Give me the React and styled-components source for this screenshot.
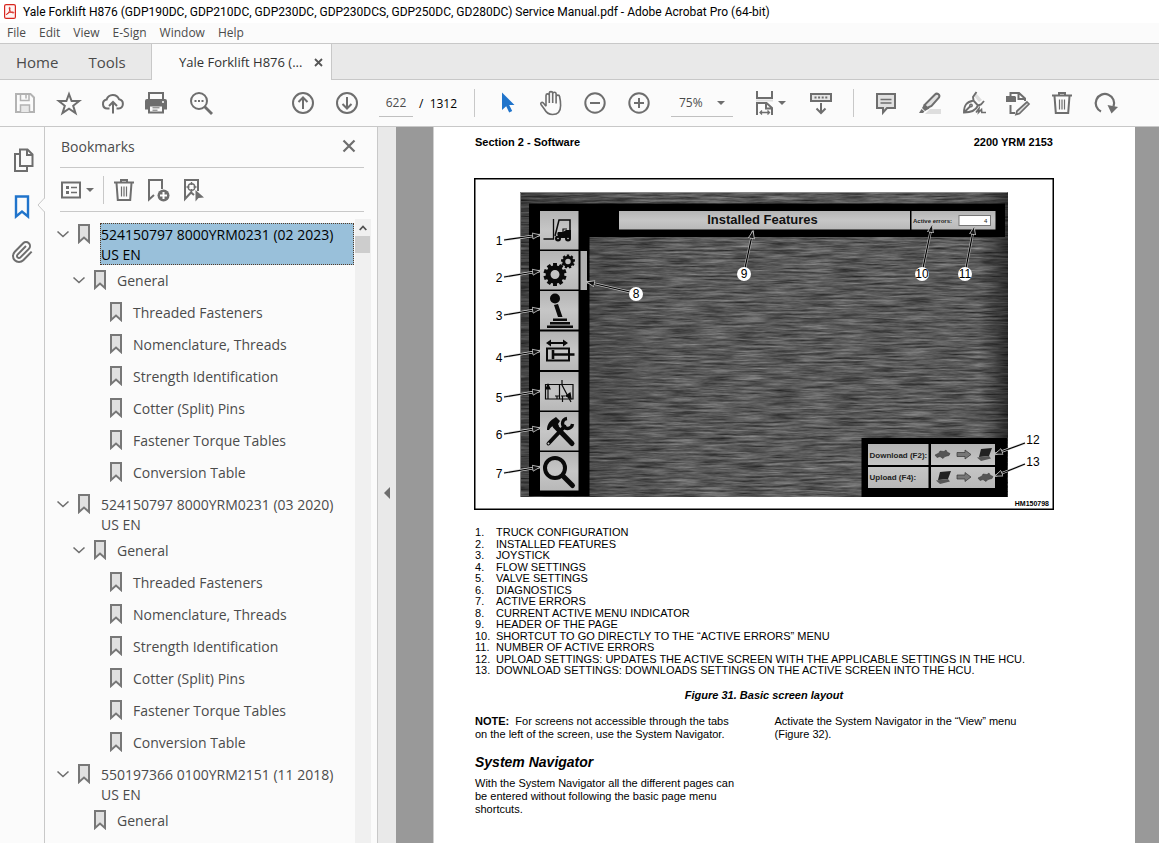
import React from "react";
import styled, { createGlobalStyle } from "styled-components";

const GlobalStyle = createGlobalStyle`
  * {
    box-sizing: border-box;
  }
  body {
    margin: 0;
    font-family: "Open Sans", "Noto Sans", sans-serif;
    color: #4b4b4b;
    background: #fbfbfb;
  }
  button, input, select {
    margin: 0;
    padding: 0;
    border: none;
    background: none;
    font: inherit;
    color: inherit;
  }
`;

const Window = styled.div`
  display: flex;
  flex-direction: column;
  height: 100vh;
  overflow: hidden;
`;

const TitleBar = styled.header`
  display: flex;
  align-items: center;
  gap: 7px;
  height: 23px;
  padding-left: 4px;
  flex-shrink: 0;
  background: #fff;
`;

const WindowTitle = styled.h1`
  margin: 0;
  font-family: Roboto, "Open Sans", sans-serif;
  font-size: 12px;
  line-height: 20px;
  font-weight: 400;
  color: #000;
  white-space: nowrap;
`;

const MenuBar = styled.nav`
  display: flex;
  gap: 13px;
  height: 20px;
  padding-left: 7px;
  flex-shrink: 0;
  font-size: 12px;
  line-height: 20px;
`;

const TabBar = styled.div`
  display: flex;
  height: 37px;
  flex-shrink: 0;
  background: #e9e9e9;
  border-top: 1px solid #c8c8c8;
  border-bottom: 1px solid #c8c8c8;
`;

const HomeTabs = styled.div`
  display: flex;
  gap: 30px;
  width: 151px;
  padding-left: 16px;
  font-size: 15px;
`;

const DocTab = styled.div`
  display: flex;
  align-items: center;
  justify-content: space-between;
  width: 181px;
  height: 36px;
  padding: 0 8px 0 27px;
  border: 1px solid #c8c8c8;
  border-width: 0 1px;
  background: #fbfbfb;
  font-size: 13px;
  color: #323232;
  svg {
    display: block;
  }
`;

const IconButton = styled.button`
  display: flex;
  align-items: center;
  justify-content: center;
  width: ${(p) => p.$width || 44}px;
  height: 100%;
  flex-shrink: 0;
  svg {
    flex-shrink: 0;
  }
`;

const Toolbar = styled.div`
  display: flex;
  align-items: center;
  height: 47px;
  flex-shrink: 0;
  padding-left: 3px;
  border-bottom: 1px solid #c8c8c8;
  font-size: 12px;
`;

const ToolGroup = styled.div`
  display: flex;
  align-items: center;
  height: 100%;
  margin-left: ${(p) => p.$before || 0}px;
`;

const Divider = styled.span`
  width: 1px;
  height: 28px;
  background: #c8c8c8;
  margin: 0 10px;
`;

const PageInput = styled.input`
  width: 34px;
  height: 28px;
  text-align: center;
  border-bottom: 1px solid #c0c0c0;
`;

const PageCount = styled.span`
  width: 45px;
  padding-left: 6px;
  color: #000;
  white-space: pre;
`;

const ZoomBox = styled.div`
  display: grid;
  align-items: center;
  width: 62px;
  height: 28px;
  margin: 0 19px 0 10px;
  border-bottom: 1px solid #c0c0c0;
  > * {
    grid-area: 1 / 1;
  }
`;

const ZoomSelect = styled.select`
  appearance: none;
  width: 100%;
  padding-left: 8px;
`;

const Caret = styled.span`
  width: 0;
  border: 4px solid transparent;
  border-top-color: #6e6e6e;
  border-bottom: none;
  justify-self: end;
  margin: 0 ${(p) => p.$right || 0}px 0 0;
  pointer-events: none;
`;

const Body = styled.div`
  display: flex;
  flex: 1;
  min-height: 0;
`;

const Rail = styled.nav`
  position: relative;
  display: flex;
  flex-direction: column;
  width: 45px;
  padding-top: 10px;
  flex-shrink: 0;
  border-right: 1px solid #c8c8c8;
`;

const RailButton = styled.button`
  display: flex;
  align-items: center;
  height: 46px;
  padding-left: 10px;
`;

const Notch = styled.svg`
  position: absolute;
  right: -1px;
  top: 71px;
`;

const Panel = styled.aside`
  display: flex;
  flex-direction: column;
  width: 333px;
  flex-shrink: 0;
  padding: 0 6px 0 15px;
  border-right: 1px solid #c8c8c8;
`;

const PanelHeader = styled.div`
  display: flex;
  align-items: center;
  justify-content: space-between;
  height: 41px;
  flex-shrink: 0;
  margin-right: 7px;
  padding: 0 8px 2px 1px;
  border-bottom: 1px solid #c8c8c8;
  svg {
    display: block;
  }
`;

const PanelTitle = styled.h2`
  margin: 0;
  font-size: 14px;
  font-weight: 400;
`;

const PanelTools = styled.div`
  display: flex;
  align-items: center;
  height: 44px;
  flex-shrink: 0;
  margin-right: 7px;
  border-bottom: 1px solid #c8c8c8;
`;

const PanelDivider = styled.span`
  width: 1px;
  height: 28px;
  margin: 0 2px 0 9px;
  background: #c8c8c8;
`;

const TreeArea = styled.div`
  display: flex;
  flex: 1;
  min-height: 0;
  margin: 7px 0 0 -4px;
`;

const Tree = styled.ul`
  flex: 1;
  margin: 0;
  padding: 0;
  list-style: none;
  overflow: hidden;
  font-size: 14px;
  line-height: 20px;
`;

const TreeRow = styled.li`
  display: flex;
  align-items: flex-start;
  padding: 4px 1px ${(p) => (p.$tall ? 0 : 6)}px ${(p) => p.$indent}px;
`;

const Twisty = styled.button`
  display: flex;
  width: 21px;
  height: 22px;
  align-items: center;
`;

const TreeIcon = styled.svg`
  width: 14px;
  height: 20px;
  margin: 1px 9px 0 0;
  flex-shrink: 0;
`;

const TreeLink = styled.a`
  flex: 1;
  padding: 2px 0 0 1px;
  color: ${(p) => (p.$selected ? "#000" : "#4b4b4b")};
  background: ${(p) => (p.$selected ? "#99c0da" : "none")};
  outline: ${(p) => (p.$selected ? "1px dotted #553c28" : "none")};
  outline-offset: -1px;
  text-decoration: none;
`;

const ScrollTrack = styled.div`
  width: 16px;
  background: #f0f0f0;
`;

const ScrollButton = styled.button`
  display: grid;
  place-items: center;
  width: 16px;
  height: 17px;
`;

const ScrollThumb = styled.div`
  width: 15px;
  height: 17px;
  background: #cdcdcd;
`;

const Splitter = styled.button`
  width: 18px;
  padding-top: 16px;
  flex-shrink: 0;
  background: #e9e9e9;
`;

const Viewer = styled.main`
  flex: 1;
  min-width: 0;
  padding: 0 24px 0 37px;
  background: #999;
  overflow: hidden;
`;

const Page = styled.article`
  min-height: 100%;
  padding: 8px 81px 0 40px;
  border-left: 1px solid #d0d0d0;
  background: #fff;
  color: #000;
  font-family: "Liberation Sans", Arial, sans-serif;
  font-size: 11px;
  line-height: 13px;
`;

const RunningHead = styled.div`
  display: flex;
  justify-content: space-between;
  padding: 1px 1px 0;
  font-weight: 700;
`;

const Figure = styled.figure`
  margin: 29px 0 0;
  svg {
    display: block;
    width: 100%;
  }
`;

const Legend = styled.ol`
  display: flex;
  flex-direction: column;
  justify-content: space-between;
  height: 149px;
  margin: 17px 0 0;
  padding: 0 0 0 1px;
  list-style: none;
  line-height: 11px;
`;

const LegendItem = styled.li`
  display: flex;
  white-space: nowrap;
`;

const LegendNumber = styled.span`
  width: 21px;
`;

const Caption = styled.figcaption`
  margin-top: 13px;
  text-align: center;
  font-weight: 700;
  font-style: italic;
`;

const Columns = styled.div`
  display: grid;
  grid-template-columns: 1fr 1fr;
  gap: 20px;
  margin-top: 13px;
  padding-left: 1px;
`;

const Paragraph = styled.p`
  margin: 0;
`;

const SectionTitle = styled.h3`
  margin: 13px 0 7px;
  font-size: 14px;
  line-height: 16px;
  font-style: italic;
`;

function Icon({ children, size = 26, color = "#6e6e6e" }) {
  return (
    <svg width={size} height={size} viewBox={`0 0 ${size} ${size}`} fill="none" stroke={color} strokeWidth="2" aria-hidden="true">
      {children}
    </svg>
  );
}

const icons = {
  save: (
    <Icon color="#b3b3b3">
      <path d="M4 4h14.500L22 7.500V22H4z" />
      <path d="M8.500 4v6.500h8.500V4M14 5v3.500" strokeWidth="1.500" />
      <path d="M8.500 22v-7h9v7" fill="#e8e8e8" strokeWidth="1.500" />
    </Icon>
  ),
  star: (
    <Icon>
      <path d="M13 4l2.600 7h7.600l-6 4.800 2.300 7.300L13 18.700l-6.500 4.400 2.300-7.300-6-4.800h7.600z" />
    </Icon>
  ),
  cloud: (
    <Icon>
      <path d="M9.500 18.500H7.200a4.500 4.500 0 0 1-.6-8.900A6.600 6.600 0 0 1 19 9.200a4.700 4.700 0 0 1-.3 9.300h-2.200M13 23.500v-11M9 16l4-4 4 4" />
    </Icon>
  ),
  print: (
    <Icon>
      <path d="M5 10V3h14v7" />
      <path d="M3 9h18a2 2 0 0 1 2 2v8.500h-4V16H5v3.500H1V11a2 2 0 0 1 2-2z" fill="#6e6e6e" stroke="none" />
      <path d="M5 15.500h14v7H5z" fill="#fbfbfb" />
      <path d="M8.500 17.800h7M8.500 20.200h5" strokeWidth="1" />
      <path d="M18 12h2" stroke="#fff" strokeWidth="1.500" />
    </Icon>
  ),
  search: (
    <Icon>
      <circle cx="11" cy="11" r="8" />
      <path d="M16.500 16.500l7.500 7.500" strokeWidth="2.800" />
      <path d="M6.500 11h2M10 11h2M13.500 11h2" />
    </Icon>
  ),
  up: (
    <Icon>
      <circle cx="13" cy="13" r="10" />
      <path d="M13 19V8M8.500 12L13 7.500l4.500 4.500" />
    </Icon>
  ),
  down: (
    <Icon>
      <circle cx="13" cy="13" r="10" />
      <path d="M13 7v11M8.500 14l4.500 4.500 4.500-4.500" />
    </Icon>
  ),
  pointer: (
    <Icon>
      <path d="M8 2.500v17.500l4.200-3.800 3 6.300 3-1.400-3-6.100H20.500z" fill="#2074cb" stroke="none" />
    </Icon>
  ),
  hand: (
    <Icon>
      <path
        d="M8 16.200V5.500a1.600 1.600 0 0 1 3.300 0V13M11.300 6V3.300a1.700 1.700 0 0 1 3.400 0V13M14.700 4a1.700 1.700 0 0 1 3.400 0v9.500M18.100 7a1.700 1.700 0 0 1 3.500-.2c.5 2 1 5 1 8.700 0 6-3.400 9-8.100 9-4.500 0-6.600-2.500-8.200-5.500L3 14.500c-.8-1.500.8-2.800 2.200-1.700L8 16.200"
        strokeWidth="1.600"
      />
    </Icon>
  ),
  minus: (
    <Icon>
      <circle cx="13" cy="13" r="9.700" />
      <path d="M8 13h10" />
    </Icon>
  ),
  plus: (
    <Icon>
      <circle cx="13" cy="13" r="9.700" />
      <path d="M8 13h10M13 8v10" />
    </Icon>
  ),
  fit: (
    <Icon>
      <path d="M5 1v7h15V1M5 25V13h9.500l5.500 5v7M14 13v5.500h6" />
      <path d="M4 10.500h17" stroke="#dedede" />
      <path d="M8 22.500h9.500M10 20.500l-2 2 2 2M15.500 20.500l2 2-2 2" strokeWidth="1.300" />
    </Icon>
  ),
  keyboard: (
    <Icon>
      <path d="M3 4h20v7H3z" fill="#e6e6e6" />
      <path d="M6.500 7.500h13" strokeDasharray="2 1.600" />
      <path d="M13 13v10M8.500 18.500L13 23l4.500-4.500" />
    </Icon>
  ),
  comment: (
    <Icon>
      <path d="M4 4h18v14h-8l-4 4.500V18H4z" fill="#e0e0e0" />
      <path d="M7.500 9.500h11M7.500 13h11" strokeWidth="1.400" />
    </Icon>
  ),
  highlight: (
    <Icon>
      <path d="M13 19h11v5H8z" fill="#dedede" stroke="none" />
      <path d="M18 4.500c2-2 5.500 0 4 3L14.500 16l-4.500 2-2.500-3z" fill="#e0e0e0" />
      <path d="M7 14.500l-2 3.500 3 3 4.500-2.500zM4.500 19L2 23h4l1.500-1.500z" fill="#6e6e6e" stroke="none" />
    </Icon>
  ),
  sign: (
    <Icon>
      <path d="M15 3l6 7-3 2-5-6z" fill="#dedede" stroke="none" />
      <path d="M3 22.500c0-7.500 2.500-10.500 9.500-12l4.500 5c-2 4.500-6.500 7-14 7zM12.500 10.500l-.5-3.500 3.500-5M17 15.500l3-1 3-3.500M3.500 22l6-6" strokeWidth="1.900" />
      <circle cx="10" cy="15.500" r="1.200" strokeWidth="1.500" />
      <path d="M15 22.500l3-4-.5 4 3-3 .3 3H25" strokeWidth="1.600" />
    </Icon>
  ),
  edit: (
    <Icon>
      <path d="M5.500 6V3H14l6 5.500V11M13.500 3v6H20M5.500 15v8H10" />
      <path d="M1 6h9l1 1v5H1z" fill="#6e6e6e" stroke="none" />
      <path d="M22 12l2 2-9.500 9.500-3.500 1 1-3.500z" fill="#e0e0e0" strokeWidth="1.700" />
    </Icon>
  ),
  trash: (
    <Icon>
      <path d="M3 5.500h20M10 5V3h6v2M5.500 6l1.300 17h12.400l1.300-17" />
      <path d="M10.500 9.500v10M13 9.500v10M15.500 9.500v10" strokeWidth="1.200" />
    </Icon>
  ),
  redo: (
    <Icon>
      <path d="M8 21.500a9.200 9.200 0 1 1 12.500-5" strokeWidth="2.200" />
      <path d="M14.500 15l10.500 2-6.500 6.500z" fill="#6e6e6e" stroke="none" />
    </Icon>
  ),
  pages: (
    <Icon>
      <path d="M10 2.500h7.500l5 5V19H10zM17 3v5h5M9 7H5v17h12v-4" />
    </Icon>
  ),
  bookmark: (
    <Icon color="#2074cb">
      <path d="M6 3.500h12v20l-6-5-6 5z" strokeWidth="2.400" />
    </Icon>
  ),
  clip: (
    <Icon size={24}>
      <path d="m16 6-8.414 8.586a2 2 0 0 0 2.829 2.829l8.414-8.586a4 4 0 1 0-5.657-5.657l-8.379 8.551a6 6 0 1 0 8.485 8.485l8.379-8.551" />
    </Icon>
  ),
  options: (
    <Icon>
      <path d="M2 5.500h18v15H2z" />
      <path d="M6 10.500h3M6 15.500h3" strokeWidth="3" />
      <path d="M11 10.500h6M11 15.500h6" strokeWidth="1.600" />
    </Icon>
  ),
  addMark: (
    <Icon>
      <path d="M9 18l-5 4.500V3h13v9" />
      <circle cx="18.500" cy="18.500" r="6" fill="#6e6e6e" stroke="none" />
      <path d="M15 18.500h7M18.500 15v7" stroke="#fff" />
    </Icon>
  ),
  findMark: (
    <Icon>
      <path d="M15 18l-3-2.500-6 6.500V3h13v11" />
      <circle cx="12.500" cy="10" r="3.300" strokeWidth="1.400" />
      <path d="M12.500 5v3M12.500 12v3M7.500 10h3M14.500 10h3" strokeWidth="1.400" />
      <path d="M16.500 13v11.500l3-3.500 5.500-.5z" fill="#6e6e6e" stroke="none" />
    </Icon>
  ),
};

const Tool = ({ name, label, width }) => (
  <IconButton type="button" aria-label={label} $width={width}>
    {icons[name]}
  </IconButton>
);

const sections = [
  "Threaded Fasteners",
  "Nomenclature, Threads",
  "Strength Identification",
  "Cotter (Split) Pins",
  "Fastener Torque Tables",
  "Conversion Table",
];

const bookmarks = [
  { level: 0, text: ["524150797 8000YRM0231 (02 2023)", "US EN"], open: true, selected: true },
  { level: 1, text: ["General"], open: true },
  ...sections.map((s) => ({ level: 2, text: [s] })),
  { level: 0, text: ["524150797 8000YRM0231 (03 2020)", "US EN"], open: true },
  { level: 1, text: ["General"], open: true },
  ...sections.map((s) => ({ level: 2, text: [s] })),
  { level: 0, text: ["550197366 0100YRM2151 (11 2018)", "US EN"], open: true },
  { level: 1, text: ["General"] },
];

const legend = [
  "TRUCK CONFIGURATION",
  "INSTALLED FEATURES",
  "JOYSTICK",
  "FLOW SETTINGS",
  "VALVE SETTINGS",
  "DIAGNOSTICS",
  "ACTIVE ERRORS",
  "CURRENT ACTIVE MENU INDICATOR",
  "HEADER OF THE PAGE",
  "SHORTCUT TO GO DIRECTLY TO THE “ACTIVE ERRORS” MENU",
  "NUMBER OF ACTIVE ERRORS",
  "UPLOAD SETTINGS: UPDATES THE ACTIVE SCREEN WITH THE APPLICABLE SETTINGS IN THE HCU.",
  "DOWNLOAD SETTINGS: DOWNLOADS SETTINGS ON THE ACTIVE SCREEN INTO THE HCU.",
];

// number, label position, arrow start, arrow tip, circled
const callouts = [
  [1, 499, 241, 504, 240, 540, 235],
  [2, 499, 278, 504, 277, 540, 271],
  [3, 499, 316, 504, 315, 540, 309],
  [4, 499, 358, 504, 357, 540, 351],
  [5, 499, 398, 504, 397, 540, 391],
  [6, 499, 435, 504, 434, 540, 428],
  [7, 499, 474, 504, 473, 540, 467],
  [8, 636, 294, 630, 292, 587, 282, true],
  [9, 744, 274, 745, 268, 753, 231, true],
  [10, 922, 274, 923, 268, 932, 225, true],
  [11, 965, 274, 966, 268, 974, 227, true],
  [12, 1033, 440, 1025, 443, 995, 454],
  [13, 1033, 462, 1025, 464, 995, 476],
];

const Gear = ({ cx, cy, r, teeth }) => (
  <g transform={`translate(${cx} ${cy})`}>
    <circle r={r * 0.6} fill="none" stroke="#0a0a0a" strokeWidth={r * 0.42} />
    {Array.from({ length: teeth }, (_, i) => (
      <rect key={i} x={-r * 0.17} y={-r} width={r * 0.34} height={r * 0.35} fill="#0a0a0a" transform={`rotate(${(i * 360) / teeth})`} />
    ))}
  </g>
);

const Laptop = ({ x, y }) => (
  <g transform={`translate(${x} ${y})`}>
    <path d="M5 0l11-1-3 8-10 1z" fill="#222" />
    <path d="M1 8.500l12-1.500 2 2.500-10 2.500z" fill="#555" />
  </g>
);

const Truck = ({ x, y }) => (
  <path transform={`translate(${x} ${y})`} d="M0 4.500l4-2 1-2 4 .5 2-1.500 1 2 3 1.500-1 2-4 1-2 2-3-2-3 1z" fill="#555" stroke="#333" strokeWidth=".5" />
);

const ArrowRight = ({ x, y }) => (
  <path transform={`translate(${x} ${y})`} d="M0 2h8V-.5L14 4l-6 4.500V6H0z" fill="#777" stroke="#333" strokeWidth=".7" />
);

function ScreenDrawing() {
  return (
    <svg viewBox="474 178 580 332" role="img" aria-label="Basic screen layout" fontFamily="Liberation Sans, Arial, sans-serif">
      <defs>
        <filter id="brushed" x="0" y="0" width="100%" height="100%" colorInterpolationFilters="sRGB">
          <feTurbulence type="fractalNoise" baseFrequency="0.03 0.5" numOctaves="4" seed="4" />
          <feColorMatrix values=".5 0 0 0 .1  .5 0 0 0 .1  .5 0 0 0 .1  0 0 0 0 1" />
        </filter>
        <linearGradient id="shade">
          <stop offset="0" stopColor="#000" stopOpacity=".3" />
          <stop offset=".3" stopColor="#000" stopOpacity="0" />
          <stop offset=".94" stopColor="#000" stopOpacity="0" />
          <stop offset="1" stopColor="#000" stopOpacity=".5" />
        </linearGradient>
        <linearGradient id="key" x2="0" y2="1">
          <stop offset="0" stopColor="#b4b4b4" />
          <stop offset=".5" stopColor="#c6c6c6" />
          <stop offset="1" stopColor="#b8b8b8" />
        </linearGradient>
        <marker id="tip" markerWidth="10" markerHeight="8" refX="8" refY="4" orient="auto" markerUnits="userSpaceOnUse">
          <path d="M.5 1l8 3-8 3z" fill="#111" stroke="#ddd" strokeWidth=".7" />
        </marker>
      </defs>
      <rect x="474.75" y="178.75" width="578.500" height="330.500" fill="#fff" stroke="#000" strokeWidth="1.500" />
      <rect x="520" y="192" width="488" height="305" filter="url(#brushed)" />
      <rect x="520" y="192" width="488" height="305" fill="url(#shade)" />
      <path d="M520.500 497V192.500H1007.500" fill="none" stroke="#888" />
      <path d="M529 203.500h476V237H589.500v259H529z" fill="#000" />
      <path d="M861.500 438H1007v59H861.500z" fill="#000" />

      {[211, 251, 291, 331.5, 372, 412, 452].map((y) => (
        <rect key={y} x="540" y={y} width="38.500" height="38.500" fill="url(#key)" />
      ))}
      <rect x="580.500" y="251" width="6.500" height="39" fill="#b0b0b0" />

      <g fill="none" stroke="#0a0a0a">
        <path d="M543.500 239h10V219" strokeWidth="1.300" />
        <path d="M555 236l4-16h11v17" strokeWidth="1.500" />
        <path d="M558 235v-2h5v-4h4" strokeWidth="1.200" />
        <path d="M558 232h5l3-2h5v8h-13z" fill="#0a0a0a" stroke="none" />
        <circle cx="558" cy="238.500" r="3" fill="#0a0a0a" stroke="none" />
        <circle cx="568" cy="238.500" r="3" fill="#0a0a0a" stroke="none" />
        <circle cx="558" cy="238.500" r=".8" fill="#ccc" stroke="none" />
        <circle cx="568" cy="238.500" r=".8" fill="#ccc" stroke="none" />
      </g>
      <Gear cx={555} cy={274.5} r={11.5} teeth={10} />
      <Gear cx={568} cy={261.5} r={7} teeth={9} />
      <g fill="#0a0a0a">
        <circle cx="555" cy="298.500" r="5" />
        <path d="M554 305l4-1 4.500 13h-4.500zM553 318.500h14v2.500h-14zM550 322h20v2.500h-20zM547 325.500h26v2.500h-26z" />
        <path d="M546 343l5-3.500v2.500h12v-2.500l5 3.500-5 3.500v-2.500h-12v2.500z" />
        <path d="M547 348.500h22v12h-22z" fill="none" stroke="#0a0a0a" strokeWidth="2" />
        <path d="M553 350v9M553 354.500h21.500" fill="none" stroke="#0a0a0a" strokeWidth="2.600" />
      </g>
      <g fill="none" stroke="#0a0a0a" strokeWidth="1.200">
        <path d="M545.500 384.500h27.500v14.500h-27.500zM559.500 384.500V399M548 399v-12M555 396h4M557 396v3M561 396h4M562.500 396v6M562 380v5l9 17" />
        <path d="M546 389l2-4.500 2 4.500zM571 398.500l-5-2.500 4-3z" fill="#0a0a0a" />
      </g>
      <g stroke="#0a0a0a" fill="none">
        <path d="M548.500 443.500l16-17" strokeWidth="4" strokeLinecap="round" />
        <path d="M555 426l17 17.500" strokeWidth="5" strokeLinecap="round" />
        <path d="M567 418.500a5 5 0 1 0 5.500 5.500" strokeWidth="3.400" />
        <path d="M547 430c0-6 3-9 6-11l3-2 4 4-2 3 1 2-3 3-3-3c-2 1-3 2-4 4z" fill="#0a0a0a" stroke="none" />
        <circle cx="548.500" cy="443.500" r="1" fill="#ccc" stroke="none" />
        <circle cx="555" cy="468" r="10" strokeWidth="4" />
        <path d="M563 476l9.500 9.500" strokeWidth="5" strokeLinecap="round" />
      </g>

      <path d="M619 211h291v18.500H619zM911.500 211h84v18.500h-84z" fill="url(#key)" />
      <text x="762.500" y="224" fontSize="13" fontWeight="700" textAnchor="middle" fill="#111">Installed Features</text>
      <text x="913" y="223" fontSize="6" fontWeight="700" fill="#222">Active errors:</text>
      <rect x="959" y="215.500" width="31.500" height="10" fill="#fff" stroke="#777" />
      <text x="984" y="223" fontSize="6" fill="#222">4</text>

      <path d="M868 444h60.500v21H868zM868 467h60.500v21H868zM931 444h64v21h-64zM931 467h64v21h-64z" fill="url(#key)" />
      <text x="869.500" y="457.500" fontSize="8" fontWeight="700" fill="#222">Download (F2):</text>
      <text x="869.500" y="480" fontSize="8" fontWeight="700" fill="#222">Upload (F4):</text>
      <Truck x={935} y={450.5} />
      <ArrowRight x={957} y={450.5} />
      <Laptop x={976} y={449} />
      <Laptop x={935} y={472} />
      <ArrowRight x={957} y={473} />
      <Truck x={978} y={473.5} />
      <text x="1049" y="506" fontSize="7" fontWeight="700" textAnchor="end">HM150798</text>

      {callouts.map(([n, x, y, x1, y1, x2, y2, circled]) => (
        <g key={n}>
          <path d={`M${x1} ${y1}L${x2} ${y2}`} stroke={circled ? "#bbb" : "#ddd"} strokeWidth="2.400" />
          <path d={`M${x1} ${y1}L${x2} ${y2}`} stroke="#000" strokeWidth="1.200" markerEnd="url(#tip)" />
          {circled && <circle cx={x} cy={y} r="7" fill="#fff" />}
          <text x={x} y={y + 4} fontSize="12" textAnchor="middle">{n}</text>
        </g>
      ))}
    </svg>
  );
}

function BookmarkRow({ level, text, open, selected }) {
  return (
    <TreeRow $indent={level * 16 + (open ? 0 : 21)} $tall={text.length > 1}>
      {open && (
        <Twisty type="button" aria-label="Collapse">
          <svg width="14" height="8" viewBox="0 0 14 8" fill="none" stroke="#6e6e6e" strokeWidth="1.600">
            <path d="M1.500 1.500L7 6.500l5.500-5" />
          </svg>
        </Twisty>
      )}
      <TreeIcon viewBox="0 0 14 20" fill="#e0e0e0" stroke="#777" strokeWidth="2">
        <path d="M2 1h10v17L7 13.500 2 18z" />
      </TreeIcon>
      <TreeLink href="#" $selected={selected}>
        {text.map((line, i) => (
          <React.Fragment key={line}>
            {i > 0 && <br />}
            {line}
          </React.Fragment>
        ))}
      </TreeLink>
    </TreeRow>
  );
}

export default function App() {
  return (
    <Window>
      <GlobalStyle />
      <TitleBar>
        <svg width="12" height="15" viewBox="0 0 12 15" fill="none" stroke="#d7261e" aria-hidden="true">
          <rect x=".6" y=".6" width="10.800" height="13.800" rx="1.500" fill="#fff5f4" strokeWidth="1.200" />
          <path d="M2.500 10.500c2-.8 3.500-3.500 3.500-6.500 0-1-.8-1-.8 0 0 2.500 2 4.800 4 5 1 0 .8-1-.4-1-2 0-4.300.7-5.800 1.700-1 .8-.8 1-.5.8z" strokeWidth="1" />
        </svg>
        <WindowTitle>
          Yale Forklift H876 (GDP190DC, GDP210DC, GDP230DC, GDP230DCS, GDP250DC, GD280DC) Service Manual.pdf - Adobe Acrobat Pro (64-bit)
        </WindowTitle>
      </TitleBar>
      <MenuBar>
        {["File", "Edit", "View", "E-Sign", "Window", "Help"].map((m) => (
          <button type="button" key={m}>{m}</button>
        ))}
      </MenuBar>
      <TabBar>
        <HomeTabs>
          <button type="button">Home</button>
          <button type="button">Tools</button>
        </HomeTabs>
        <DocTab>
          Yale Forklift H876 (...
          <button type="button" aria-label="Close tab">
            <svg width="9" height="9" viewBox="0 0 9 9" stroke="#555" strokeWidth="1.800">
              <path d="M1 1l7 7M8 1L1 8" />
            </svg>
          </button>
        </DocTab>
      </TabBar>
      <Toolbar>
        <ToolGroup>
          <Tool name="save" label="Save" />
          <Tool name="star" label="Star" />
          <Tool name="cloud" label="Upload to cloud" />
          <Tool name="print" label="Print" />
          <Tool name="search" label="Find" />
        </ToolGroup>
        <ToolGroup $before={58}>
          <Tool name="up" label="Previous page" />
          <Tool name="down" label="Next page" />
        </ToolGroup>
        <ToolGroup $before={10}>
          <PageInput aria-label="Page" defaultValue="622" />
          <PageCount>/  1312</PageCount>
        </ToolGroup>
        <ToolGroup $before={6}>
          <Divider />
          <Tool name="pointer" label="Select" />
          <Tool name="hand" label="Pan" />
          <Tool name="minus" label="Zoom out" />
          <Tool name="plus" label="Zoom in" />
          <ZoomBox>
            <ZoomSelect aria-label="Zoom" defaultValue="75%">
              <option>75%</option>
              <option>100%</option>
            </ZoomSelect>
            <Caret $right={8} />
          </ZoomBox>
          <Tool name="fit" label="Fit width" width={26} />
          <Caret $right={13} />
          <Tool name="keyboard" label="Read mode" />
          <Divider />
          <Tool name="comment" label="Comment" />
          <Tool name="highlight" label="Highlight" />
          <Tool name="sign" label="Sign" />
          <Tool name="edit" label="Edit" />
          <Tool name="trash" label="Delete" />
          <Tool name="redo" label="Rotate" />
        </ToolGroup>
      </Toolbar>
      <Body>
        <Rail>
          <RailButton type="button" aria-label="Page thumbnails">{icons.pages}</RailButton>
          <RailButton type="button" aria-label="Bookmarks">{icons.bookmark}</RailButton>
          <RailButton type="button" aria-label="Attachments">{icons.clip}</RailButton>
          <Notch width="8" height="14" viewBox="0 0 8 14">
            <path d="M8 0L1 7l7 7z" fill="#fbfbfb" />
            <path d="M7.500 0L1 7l6.500 7" fill="none" stroke="#c8c8c8" />
          </Notch>
        </Rail>
        <Panel>
          <PanelHeader>
            <PanelTitle>Bookmarks</PanelTitle>
            <button type="button" aria-label="Close panel">
              <svg width="14" height="14" viewBox="0 0 14 14" stroke="#6e6e6e" strokeWidth="2.200">
                <path d="M1.500 1.500l11 11M12.500 1.500l-11 11" />
              </svg>
            </button>
          </PanelHeader>
          <PanelTools>
            <Tool name="options" label="Options" width={26} />
            <Caret />
            <PanelDivider />
            <Tool name="trash" label="Delete bookmark" width={35} />
            <Tool name="addMark" label="New bookmark" width={34} />
            <Tool name="findMark" label="Find current bookmark" width={34} />
          </PanelTools>
          <TreeArea>
            <Tree>
              {bookmarks.map((b, i) => (
                <BookmarkRow key={i} {...b} />
              ))}
            </Tree>
            <ScrollTrack>
              <ScrollButton type="button" aria-label="Scroll up">
                <svg width="8" height="6" viewBox="0 0 8 6" fill="none" stroke="#505050" strokeWidth="1.800">
                  <path d="M.7 5L4 1.500 7.300 5" />
                </svg>
              </ScrollButton>
              <ScrollThumb />
            </ScrollTrack>
          </TreeArea>
        </Panel>
        <Splitter type="button" aria-label="Collapse panel">
          <svg width="6" height="12" viewBox="0 0 6 12">
            <path d="M6 0v12L0 6z" fill="#6e6e6e" />
          </svg>
        </Splitter>
        <Viewer>
          <Page>
            <RunningHead>
              <span>Section 2 - Software</span>
              <span>2200 YRM 2153</span>
            </RunningHead>
            <Figure>
              <ScreenDrawing />
              <Legend>
                {legend.map((item, i) => (
                  <LegendItem key={item}>
                    <LegendNumber>{i + 1}.</LegendNumber>
                    {item}
                  </LegendItem>
                ))}
              </Legend>
              <Caption>Figure 31. Basic screen layout</Caption>
            </Figure>
            <Columns>
              <div>
                <Paragraph>
                  <b>NOTE:</b>&nbsp; For screens not accessible through the tabs
                  <br />
                  on the left of the screen, use the System Navigator.
                </Paragraph>
                <SectionTitle>System Navigator</SectionTitle>
                <Paragraph>
                  With the System Navigator all the different pages can
                  <br />
                  be entered without following the basic page menu
                  <br />
                  shortcuts.
                </Paragraph>
              </div>
              <Paragraph>
                Activate the System Navigator in the “View” menu
                <br />
                (Figure 32).
              </Paragraph>
            </Columns>
          </Page>
        </Viewer>
      </Body>
    </Window>
  );
}
